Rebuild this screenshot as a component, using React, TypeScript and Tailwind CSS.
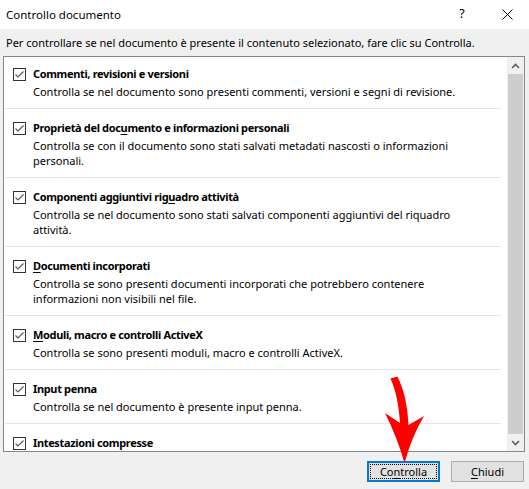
import React from "react";

type Item = { title: React.ReactNode; lines: string[] };

const items: Item[] = [
  {
    title: <>Commenti, revisioni e versioni</>,
    lines: ["Controlla se nel documento sono presenti commenti, versioni e segni di revisione."],
  },
  {
    title: (
      <>
        Proprietà del doc<u className="underline-offset-2">u</u>mento e informazioni personali
      </>
    ),
    lines: [
      "Controlla se con il documento sono stati salvati metadati nascosti o informazioni",
      "personali.",
    ],
  },
  {
    title: (
      <>
        Componenti aggiuntivi rig<u className="underline-offset-2">u</u>adro attività
      </>
    ),
    lines: [
      "Controlla se nel documento sono stati salvati componenti aggiuntivi del riquadro",
      "attività.",
    ],
  },
  {
    title: (
      <>
        <u className="underline-offset-2">D</u>ocumenti incorporati
      </>
    ),
    lines: [
      "Controlla se sono presenti documenti incorporati che potrebbero contenere",
      "informazioni non visibili nel file.",
    ],
  },
  {
    title: (
      <>
        <u className="underline-offset-2">M</u>oduli, macro e controlli ActiveX
      </>
    ),
    lines: ["Controlla se sono presenti moduli, macro e controlli ActiveX."],
  },
  {
    title: <>Input penna</>,
    lines: ["Controlla se nel documento è presente input penna."],
  },
  {
    title: <>Intestazioni compresse</>,
    lines: [],
  },
];

function CheckBox() {
  return (
    <svg width="13" height="13" viewBox="0 0 13 13" className="shrink-0">
      <rect x="0.5" y="0.5" width="12" height="12" fill="#fff" stroke="#333" />
      <path d="M2.5 6.5 L5 9 L10.5 3.5" fill="none" stroke="#555" strokeWidth="1.1" />
    </svg>
  );
}

export default function App() {
  return (
    <div
      className="relative w-[529px] h-[489px] bg-[#f0f0f0] flex flex-col overflow-hidden text-[11px] text-black"
      style={{ fontFamily: '"Noto Sans", "Open Sans", sans-serif' }}
    >
      {/* Title bar */}
      <div className="h-[29px] bg-white flex items-center pl-[6px] shrink-0">
        <span className="flex-1 text-[11.5px]">Controllo documento</span>
        <span className="w-[10px] text-center mr-[35px] text-[12.5px]">?</span>
        <svg width="11" height="11" viewBox="0 0 11 11" className="mr-[16px]">
          <path d="M0.5 0.5 L10.5 10.5 M10.5 0.5 L0.5 10.5" stroke="#000" strokeWidth="1" />
        </svg>
      </div>

      {/* Instruction */}
      <div className="h-[27px] flex items-center pl-[6px] pt-[1px] shrink-0 whitespace-nowrap">
        Per controllare se nel documento è presente il contenuto selezionato, fare clic su Controlla.
      </div>

      {/* List box */}
      <div className="ml-[3px] w-[522px] h-[396px] border border-[#828790] bg-white flex shrink-0">
        <div className="flex-1 overflow-hidden">
          {items.map((it, i) => (
            <div key={i}>
              {i > 0 && <div className="h-[1px] bg-[#e3e3e3] ml-[1px] mr-[6px]" />}
              <div className={`${i === 0 ? "pt-[9px]" : "pt-[11px]"} pb-[9px] pl-[9px] flex flex-col gap-[2px]`}>
                <div className="flex items-center gap-[7px] h-[16px]">
                  <CheckBox />
                  <span className="font-bold leading-[16px] whitespace-nowrap tracking-[-0.35px]">{it.title}</span>
                </div>
                {it.lines.length > 0 && (
                  <div className="pl-[20px] leading-[15px]">
                    {it.lines.map((l, j) => (
                      <div key={j} className="whitespace-nowrap">
                        {l}
                      </div>
                    ))}
                  </div>
                )}
              </div>
            </div>
          ))}
        </div>
        {/* Scrollbar */}
        <div className="w-[17px] bg-[#f0f0f0] flex flex-col shrink-0">
          <div className="h-[17px] flex items-center justify-center">
            <svg width="9" height="6" viewBox="0 0 9 6">
              <path d="M1 5 L4.5 1.5 L8 5" fill="none" stroke="#606060" strokeWidth="1.6" />
            </svg>
          </div>
          <div className="flex-1 mx-[1px] bg-[#cdcdcd]" />
          <div className="h-[17px] flex items-center justify-center">
            <svg width="9" height="6" viewBox="0 0 9 6">
              <path d="M1 1 L4.5 4.5 L8 1" fill="none" stroke="#606060" strokeWidth="1.6" />
            </svg>
          </div>
        </div>
      </div>

      {/* Buttons */}
      <div className="flex justify-end gap-[11px] pt-[9px] pr-[5px]">
        <button className="w-[73px] h-[21px] border-2 border-[#0078d7] bg-[#e1e1e1] p-[1px] flex">
          <span className="flex-1 border border-dotted border-black flex items-center justify-center leading-none">
            Co<u className="underline-offset-2">n</u>trolla
          </span>
        </button>
        <button className="w-[73px] h-[21px] border border-[#adadad] bg-[#e1e1e1] flex items-center justify-center leading-none">
          <u className="underline-offset-2">C</u>hiudi
        </button>
      </div>

      {/* Red arrow annotation */}
      <svg
        className="absolute left-0 top-0 pointer-events-none"
        width="529"
        height="489"
        viewBox="0 0 529 489"
      >
        <path
          d="M390.5 378.5 C396 391 399 406 400 423 L385 413 Q397 437 404.5 463 Q412 436 424 416 L408.5 425 C407.5 405 404 390 397.5 376.5 Z"
          fill="#ff0000"
        />
      </svg>
    </div>
  );
}
